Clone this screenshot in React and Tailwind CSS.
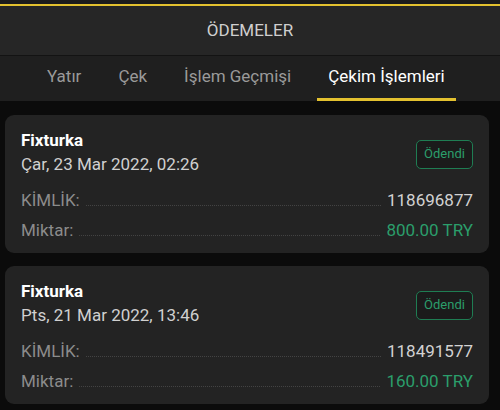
import React from "react";

const font = { fontFamily: "Roboto, 'Noto Sans', sans-serif" };

function Row({ label, value, green }) {
  return (
    <div className="flex items-baseline h-[30px] leading-[30px]">
      <span className="text-[17px] text-[#8c8c8c]">{label}</span>
      <span className="flex-1 h-0 border-b border-dotted border-[#434343] mx-[6px]" />
      <span className={`text-[17px] ${green ? "text-[#2b9e6b]" : "text-[#d2d2d2]"}`}>{value}</span>
    </div>
  );
}

function Card({ date, id, amount }) {
  return (
    <div className="w-[484px] ml-[5px] h-[138px] rounded-[9px] bg-[#232323] px-[16px] pt-[15px]">
      <div className="flex items-center justify-between">
        <div>
          <div className="text-[17px] leading-[20px] font-bold text-white">Fixturka</div>
          <div className="text-[17px] leading-[28px] text-[#d0d0d0]">{date}</div>
        </div>
        <div className="h-[29px] w-[57px] rounded-[5px] border border-[#1f7d53] bg-[#1b1b1b] flex items-center justify-center text-[13px] text-[#2b9e6b]">
          Ödendi
        </div>
      </div>
      <div className="mt-[7px]">
        <Row label="KİMLİK:" value={id} />
        <Row label="Miktar:" value={amount} green />
      </div>
    </div>
  );
}

export default function App() {
  const tabs = ["Yatır", "Çek", "İşlem Geçmişi", "Çekim İşlemleri"];
  return (
    <div style={font} className="w-[500px] h-[410px] bg-[#0b0b0b] overflow-hidden">
      <div className="h-[4px] bg-[#1c1c1c]" />
      <div className="h-[2px] bg-[#e3c12f]" />
      <div className="h-[50px] bg-[#262626] flex items-center justify-center text-[17px] text-[#cfcfcf] border-b border-[#131313]">
        ÖDEMELER
      </div>
      <div className="h-[45px] bg-[#1f1f1f] flex pl-[36px] gap-[15px]">
        {tabs.map((t, i) => (
          <div
            key={t}
            className={`px-[11px] h-full flex items-center text-[17px] border-b-[3px] ${
              i === 3 ? "text-white border-[#e3c12f]" : "text-[#9a9a9a] border-transparent"
            }`}
          >
            {t}
          </div>
        ))}
      </div>
      <div className="pt-[14px] flex flex-col gap-[13px]">
        <Card date="Çar, 23 Mar 2022, 02:26" id="118696877" amount="800.00 TRY" />
        <Card date="Pts, 21 Mar 2022, 13:46" id="118491577" amount="160.00 TRY" />
      </div>
    </div>
  );
}
